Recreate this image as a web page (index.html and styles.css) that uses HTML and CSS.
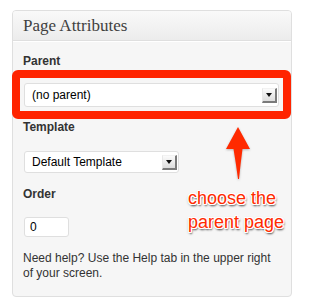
FILE: index.html
```html
<!DOCTYPE html>
<html>
<head>
<meta charset="utf-8">
<link rel="stylesheet" href="styles.css">
</head>
<body>
<div class="panel">
  <div class="panel-head">Page Attributes</div>
  <div class="panel-body">
    <div class="label label-parent">Parent</div>
    <div class="select select-parent">
      <span class="select-text">(no parent)</span>
      <span class="select-btn"><span class="tri"></span></span>
    </div>
    <div class="label label-template">Template</div>
    <div class="select select-template">
      <span class="select-text">Default Template</span>
      <span class="select-btn"><span class="tri"></span></span>
    </div>
    <div class="label label-order">Order</div>
    <div class="input-order">0</div>
    <p class="help">Need help? Use the Help tab in the upper right of your screen.</p>
  </div>
</div>
<div class="highlight"></div>
<svg class="arrow" width="30" height="56" viewBox="0 0 30 56">
  <path d="M15 1 L27 23 L19.5 23 Q17.5 38 16 53 L15 53 Q13 38 10.5 23 L3 23 Z" fill="#ff2a00"/>
</svg>
<div class="note">choose the<br>parent page</div>
</body>
</html>
```
FILE: styles.css
```css
html, body {
  margin: 0;
  padding: 0;
  background: #ffffff;
}
body {
  width: 301px;
  height: 302px;
  position: relative;
  overflow: hidden;
  font-family: "Liberation Sans", Arial, sans-serif;
  color: #333333;
}
.panel {
  margin: 10px 0 0 12px;
  width: 278px;
  border: 1px solid #dfdfdf;
  border-radius: 4px;
  background: #f6f6f6;
  overflow: hidden;
}
.panel-head {
  height: 29px;
  line-height: 29px;
  padding-left: 10px;
  font-family: "Liberation Serif", Georgia, serif;
  font-size: 17px;
  color: #404040;
  background: linear-gradient(to bottom, #f9f9f9, #ececec);
  border-bottom: 1px solid #dfdfdf;
  box-shadow: 0 1px 0 #ffffff;
}
.panel-body {
  padding: 13px 10px 15px 10px;
}
.label {
  font-size: 12px;
  line-height: 15px;
  font-weight: bold;
  color: #333333;
}
.label-parent { margin-bottom: 14px; }
.label-template { margin-top: 13px; margin-bottom: 16px; }
.label-order { margin-top: 14px; margin-bottom: 15px; }
.select {
  display: flex;
  align-items: center;
  justify-content: space-between;
  box-sizing: border-box;
  margin-left: 1px;
  background: #ffffff;
  border: 1px solid #dfdfdf;
  border-radius: 3px;
  padding-left: 7px;
  padding-right: 1px;
  font-size: 12px;
  color: #000000;
}
.select-parent {
  width: 255px;
  height: 24px;
}
.select-template {
  width: 155px;
  height: 22px;
}
.select-btn {
  box-sizing: border-box;
  width: 15px;
  height: 15px;
  display: flex;
  align-items: center;
  justify-content: center;
  background: linear-gradient(to bottom, #fbfbfb, #dcdcdc);
  border-top: 1px solid #f2f2f2;
  border-left: 1px solid #e8e8e8;
  border-right: 2px solid #7a7a7a;
  border-bottom: 2px solid #7a7a7a;
}
.tri {
  width: 0;
  height: 0;
  border-left: 3px solid transparent;
  border-right: 3px solid transparent;
  border-top: 4px solid #111111;
}
.input-order {
  box-sizing: border-box;
  margin-left: 1px;
  width: 45px;
  height: 20px;
  line-height: 18px;
  padding-left: 5px;
  background: #ffffff;
  border: 1px solid #dfdfdf;
  border-radius: 3px;
  font-size: 12px;
  color: #000000;
}
.help {
  margin: 14px 0 0 0;
  font-size: 12px;
  line-height: 15px;
  color: #333333;
}
.highlight {
  position: absolute;
  left: 12px;
  top: 70px;
  width: 279px;
  height: 49px;
  box-sizing: border-box;
  border: 8px solid #ff2400;
  border-radius: 6px;
}
.arrow {
  position: absolute;
  left: 223px;
  top: 126px;
  filter: drop-shadow(0 1px 1px rgba(0,0,0,0.25));
}
.note {
  position: absolute;
  left: 188px;
  top: 186px;
  font-family: "Liberation Sans", Arial, sans-serif;
  font-size: 18px;
  line-height: 24px;
  color: #ff2a00;
  white-space: nowrap;
  text-shadow:
    1px 0 0 #fff, -1px 0 0 #fff, 0 1px 0 #fff, 0 -1px 0 #fff,
    1px 1px 0 #fff, -1px -1px 0 #fff, 1px -1px 0 #fff, -1px 1px 0 #fff,
    1px 2px 2px rgba(0,0,0,0.7), 0 1px 3px rgba(0,0,0,0.45);
}
```
